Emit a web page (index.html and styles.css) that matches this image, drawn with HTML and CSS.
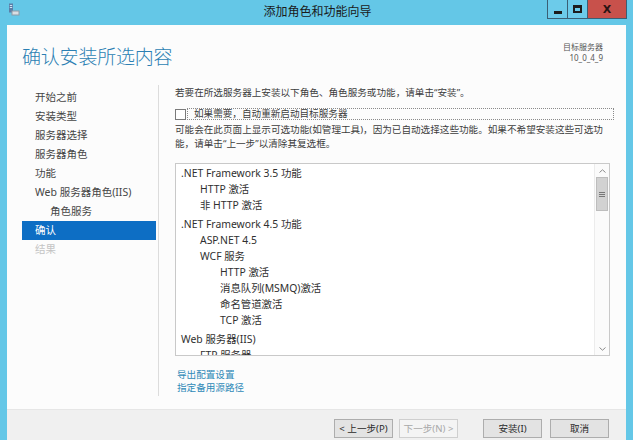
FILE: index.html
```html
<!DOCTYPE html>
<html lang="zh-CN">
<head>
<meta charset="utf-8">
<title>添加角色和功能向导</title>
<link rel="stylesheet" href="styles.css">
</head>
<body>
<div class="window">
  <div class="titlebar">
    <div class="tb-left">
      <svg class="app-icon" width="12" height="13" viewBox="0 0 12 13">
        <rect x="1" y="0.5" width="4" height="9" fill="#5a7fa8"/>
        <rect x="1.8" y="2" width="2.4" height="1" fill="#cfe3f3"/>
        <rect x="1.8" y="4" width="2.4" height="1" fill="#cfe3f3"/>
        <rect x="3.5" y="7.5" width="8" height="5" fill="#8c9aa6"/>
        <rect x="4.5" y="8.5" width="6" height="3" fill="#d9dee3"/>
      </svg>
    </div>
    <div class="title">添加角色和功能向导</div>
    <div class="controls">
      <span class="ctl ctl-min"><span class="min-glyph"></span></span>
      <span class="ctl ctl-max"><span class="max-glyph"></span></span>
      <span class="ctl ctl-close">X</span>
    </div>
  </div>

  <div class="client">
    <header class="head">
      <h1 class="page-title">确认安装所选内容</h1>
      <div class="target">
        <div>目标服务器</div>
        <div>10_0_4_9</div>
      </div>
    </header>

    <div class="main">
      <nav class="steps">
        <div class="step">开始之前</div>
        <div class="step">安装类型</div>
        <div class="step">服务器选择</div>
        <div class="step">服务器角色</div>
        <div class="step">功能</div>
        <div class="step">Web 服务器角色(IIS)</div>
        <div class="step sub">角色服务</div>
        <div class="step active">确认</div>
        <div class="step disabled">结果</div>
      </nav>

      <section class="content">
        <p class="intro">若要在所选服务器上安装以下角色、角色服务或功能，请单击“安装”。</p>
        <div class="check-row">
          <span class="checkbox"></span>
          <span class="check-label">如果需要，自动重新启动目标服务器</span>
        </div>
        <p class="note"><span class="note-line">可能会在此页面上显示可选功能(如管理工具)，因为已自动选择这些功能。如果不希望安装这些可选功</span><span class="note-line">能，请单击“上一步”以清除其复选框。</span></p>

        <div class="listbox">
          <div class="items">
            <div class="group">
              <div class="item l0">.NET Framework 3.5 功能</div>
              <div class="item l1">HTTP 激活</div>
              <div class="item l1">非 HTTP 激活</div>
            </div>
            <div class="group">
              <div class="item l0">.NET Framework 4.5 功能</div>
              <div class="item l1">ASP.NET 4.5</div>
              <div class="item l1">WCF 服务</div>
              <div class="item l2">HTTP 激活</div>
              <div class="item l2">消息队列(MSMQ)激活</div>
              <div class="item l2">命名管道激活</div>
              <div class="item l2">TCP 激活</div>
            </div>
            <div class="group">
              <div class="item l0">Web 服务器(IIS)</div>
              <div class="item l1">FTP 服务器</div>
            </div>
          </div>
          <div class="scrollbar">
            <div class="arrow">
              <svg width="7" height="4" viewBox="0 0 7 4"><path d="M0.5 3.5 L3.5 0.8 L6.5 3.5" fill="none" stroke="#8a8a8a" stroke-width="1"/></svg>
            </div>
            <div class="track">
              <div class="thumb"><span class="grip"></span></div>
            </div>
            <div class="arrow">
              <svg width="7" height="4" viewBox="0 0 7 4"><path d="M0.5 0.5 L3.5 3.2 L6.5 0.5" fill="none" stroke="#8a8a8a" stroke-width="1"/></svg>
            </div>
          </div>
        </div>

        <div class="links">
          <a class="link">导出配置设置</a>
          <a class="link">指定备用源路径</a>
        </div>
      </section>
    </div>

    <footer class="buttons">
      <button class="btn">&lt; 上一步(<u>P</u>)</button>
      <button class="btn" disabled>下一步(<u>N</u>) &gt;</button>
      <button class="btn btn-install">安装(<u>I</u>)</button>
      <button class="btn">取消</button>
    </footer>
  </div>
</div>
</body>
</html>
```

FILE: styles.css
```css
* { box-sizing: border-box; }

html, body {
  margin: 0;
  padding: 0;
}

body {
  width: 633px;
  height: 440px;
  overflow: hidden;
  background: #64c7e7;
  font-family: "Noto Sans", "Noto Sans CJK SC", sans-serif;
  color: #333;
}

.window {
  display: flex;
  flex-direction: column;
  height: 440px;
}

/* ---------- title bar ---------- */
.titlebar {
  height: 25px;
  display: grid;
  grid-template-columns: 1fr auto 1fr;
  align-items: start;
}

.tb-left {
  padding: 3px 0 0 8px;
}

.app-icon { display: block; }

.title {
  font-size: 12px;
  line-height: 24px;
  color: #1a1a1a;
  padding-left: 2px;
}

.controls {
  justify-self: end;
  display: flex;
  margin-right: 6px;
}

.ctl {
  height: 19px;
  border: 1px solid #3a5f75;
  border-top: none;
  display: flex;
  align-items: center;
  justify-content: center;
}

.ctl-min {
  width: 21px;
  background: #6ccbea;
}

.ctl-max {
  width: 21px;
  margin-left: -1px;
  background: #6ccbea;
}

.ctl-close {
  width: 40px;
  margin-left: -1px;
  background: #c8514b;
  color: #2a1414;
  font-family: "DejaVu Sans", sans-serif;
  font-weight: bold;
  font-size: 11px;
  line-height: 17px;
}

.min-glyph {
  width: 8px;
  height: 3px;
  background: #1d1d1d;
  margin-top: 6px;
}

.max-glyph {
  width: 9px;
  height: 8px;
  border: 2px solid #1d1d1d;
  border-top-width: 3px;
}

/* ---------- client ---------- */
.client {
  flex: 1;
  margin: 0 7px;
  background: #fcfcfc;
  display: flex;
  flex-direction: column;
}

.head {
  height: 55px;
  display: flex;
  justify-content: space-between;
  align-items: flex-start;
  padding: 0 23px 0 15px;
}

.page-title {
  margin: 19px 0 0;
  font-family: "Noto Sans CJK SC", sans-serif;
  font-weight: 300;
  font-size: 19px;
  line-height: 24px;
  color: #2b7fb3;
  letter-spacing: -0.2px;
}

.target {
  margin-top: 16px;
  text-align: right;
  font-size: 8px;
  line-height: 11px;
  color: #555;
}

.main {
  height: 329px;
  display: flex;
}

/* ---------- steps ---------- */
.steps {
  width: 152px;
  margin: 5px 0 13px;
  padding: 3px 2px 0 15px;
  border-right: 1px solid #dcdcdc;
}

.step {
  height: 19px;
  line-height: 19px;
  padding-left: 13px;
  font-size: 10.5px;
  color: #454545;
  white-space: nowrap;
}

.step.sub { padding-left: 28px; }

.step.active {
  background: #0d6ec4;
  color: #fff;
}

.step.disabled { color: #c4c4c4; }

/* ---------- content ---------- */
.content {
  flex: 1;
  padding: 6px 16px 0 16px;
  font-size: 9.6px;
  color: #3c3c3c;
}

.intro {
  margin: 0;
  line-height: 13px;
}

.check-row {
  margin-top: 9px;
  display: flex;
  align-items: center;
  height: 12px;
}

.checkbox {
  width: 11px;
  height: 11px;
  border: 1px solid #7a7a7a;
  background: #fff;
  flex: none;
}

.check-label {
  flex: 1;
  height: 12px;
  line-height: 10px;
  margin-left: 1px;
  margin-right: -4px;
  padding-left: 6px;
  border: 1px dotted #8a8a8a;
}

.note {
  margin: 3px 0 0;
  line-height: 14px;
}

.note-line {
  display: block;
  white-space: nowrap;
}

.listbox {
  margin-top: 12px;
  height: 193px;
  border: 1px solid #c9c9c9;
  background: #fff;
  display: flex;
}

.items {
  flex: 1;
  overflow: hidden;
  padding: 1px 0 0 5px;
  font-size: 10.4px;
  color: #303030;
}

.group + .group { margin-top: 3px; }

.item {
  height: 16px;
  line-height: 16px;
  white-space: nowrap;
}

.item.l1 { padding-left: 19px; }
.item.l2 { padding-left: 39px; }

.scrollbar {
  width: 15px;
  border-left: 1px solid #ececec;
  background: #fbfbfb;
  display: flex;
  flex-direction: column;
}

.arrow {
  height: 13px;
  display: flex;
  align-items: center;
  justify-content: center;
}

.track {
  flex: 1;
}

.thumb {
  height: 34px;
  margin: 0 1px;
  background: #d2d2d2;
  border: 1px solid #bdbdbd;
  display: flex;
  align-items: center;
  justify-content: center;
}

.grip {
  width: 6px;
  height: 5px;
  border-top: 1px solid #777;
  border-bottom: 1px solid #777;
  background: linear-gradient(#777, #777) center / 100% 1px no-repeat;
}

.links {
  margin-top: 12px;
  display: flex;
  flex-direction: column;
}

.link {
  line-height: 13px;
  color: #2f8ab8;
  margin-left: 2px;
}

/* ---------- footer ---------- */
.buttons {
  flex: 1;
  background: #f0f0f0;
  border-top: 1px solid #e6e6e6;
  display: flex;
  justify-content: flex-end;
  align-items: flex-start;
  padding: 9px 17px 0 0;
}

.btn {
  width: 59px;
  height: 19px;
  padding: 0;
  border: 1px solid #adadad;
  background: #e3e3e3;
  font-family: "Noto Sans", "Noto Sans CJK SC", sans-serif;
  font-size: 9.6px;
  line-height: 17px;
  color: #2a2a2a;
  margin-left: 6px;
}

.btn u { text-decoration: none; }

.btn:disabled {
  color: #a8a8a8;
  background: #f4f4f4;
  border-color: #cfcfcf;
}

.btn-install { margin-left: 25px; }
.btn-install + .btn { margin-left: 8px; }
```
